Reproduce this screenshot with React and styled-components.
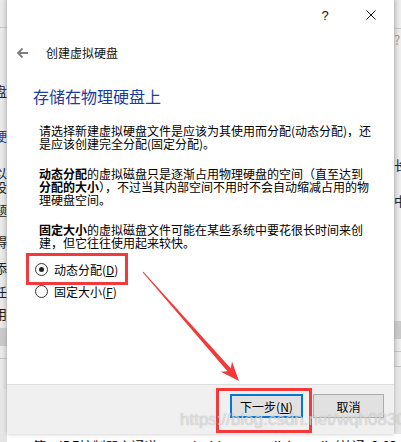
import React from "react";
import styled, { createGlobalStyle } from "styled-components";

const GlobalStyle = createGlobalStyle`
  html, body { margin: 0; padding: 0; background: #fff; }
  body { font-family: "Noto Sans CJK SC", "Noto Sans", sans-serif; }
`;

const Page = styled.div`
  position: relative;
  width: 401px;
  height: 442px;
  overflow: hidden;
  display: grid;
  grid-template-columns: 7px 387px 7px;
  grid-template-rows: 434px 8px;
  background: #f0f0f0;
  font-family: "Noto Sans CJK SC", "Noto Sans", sans-serif;
`;

const Strip = styled.div`
  display: flex;
  flex-direction: column;
  overflow: hidden;
  background: ${(p) => (p.$side === "left" ? "linear-gradient(90deg,#ececec,#dcdcdc)" : "linear-gradient(90deg,#d8d8d8,#f0f0f0)")};
`;

const StripBand = styled.div`
  height: ${(p) => p.$h}px;
  flex: none;
  background: ${(p) => p.$bg || "transparent"};
  border-bottom: ${(p) => (p.$line ? "1px solid #c4c4c4" : "none")};
`;

const StripGlyph = styled.div`
  display: flex;
  justify-content: ${(p) => (p.$side === "left" ? "flex-end" : "flex-start")};
  height: ${(p) => p.$h}px;
  flex: none;
  font-size: 13px;
  line-height: ${(p) => p.$h}px;
  color: ${(p) => p.$color || "#222"};
  white-space: nowrap;
  & > span { flex: none; }
`;

const Dialog = styled.div`
  display: flex;
  flex-direction: column;
  background: #fff;
  box-shadow: 0 0 4px rgba(0, 0, 0, 0.25);
  z-index: 1;
`;

const TitleBar = styled.div`
  display: flex;
  justify-content: flex-end;
  height: 30px;
  flex: none;
`;

const CaptionButton = styled.div`
  width: 46px;
  height: 30px;
  display: flex;
  align-items: center;
  justify-content: center;
  font-family: "Liberation Sans", sans-serif;
  font-size: 13px;
  color: #111;
`;

const NavRow = styled.div`
  display: flex;
  align-items: center;
  height: 24px;
  margin-top: 11px;
  padding-left: 9px;
  gap: 17px;
  flex: none;
`;

const WizardTitle = styled.div`
  font-size: 12px;
  color: #111;
  line-height: 24px;
`;

const Heading = styled.div`
  margin: 21px 0 0 26px;
  font-size: 16px;
  line-height: 20px;
  color: #1a3c9c;
  flex: none;
`;

const Body = styled.div`
  margin: 18px 0 0 32px;
  display: flex;
  flex-direction: column;
  gap: 17px;
  flex: none;
`;

const Para = styled.div`
  display: flex;
  flex-direction: column;
`;

const Line = styled.div`
  font-size: 12px;
  line-height: 13px;
  height: 13px;
  white-space: nowrap;
  color: #000;
  & b { font-weight: 700; }
`;

const RadioGroup = styled.div`
  margin: 10px 0 0 28px;
  display: flex;
  flex-direction: column;
  gap: 2px;
  flex: none;
`;

const RadioRow = styled.div`
  display: flex;
  align-items: center;
  height: 20px;
  gap: 6px;
  font-size: 12px;
  color: #000;
`;

const RadioCircle = styled.span`
  width: 11px;
  height: 11px;
  border-radius: 50%;
  border: 1px solid #333;
  display: flex;
  align-items: center;
  justify-content: center;
  background: #fff;
  &::after {
    content: "";
    width: 5px;
    height: 5px;
    border-radius: 50%;
    background: ${(p) => (p.$checked ? "#222" : "transparent")};
  }
`;

const Spacer = styled.div`
  flex: 1;
`;

const Footer = styled.div`
  height: 40px;
  flex: none;
  border-top: 1px solid #dfdfdf;
  background: #f0f0f0;
  display: flex;
  justify-content: flex-end;
  align-items: flex-start;
  padding: 9px 10px 0 0;
  gap: 10px;
  box-sizing: content-box;
`;

const Button = styled.div`
  width: ${(p) => p.$w}px;
  height: 24px;
  box-sizing: border-box;
  background: #e1e1e1;
  border: ${(p) => (p.$default ? "2px solid #0078d7" : "1px solid #adadad")};
  display: flex;
  align-items: center;
  justify-content: center;
  font-size: 12px;
  color: #000;
`;

const BottomStrip = styled.div`
  grid-column: 1 / span 3;
  background: #fff;
  overflow: hidden;
  font-size: 13px;
  line-height: 17px;
  white-space: nowrap;
  color: #000;
  border-left: 7px solid #e4e4e4;
  box-sizing: border-box;
  padding-left: 26px;
  padding-top: 3px;
`;

const RedBox = styled.div`
  position: absolute;
  left: ${(p) => p.$x}px;
  top: ${(p) => p.$y}px;
  width: ${(p) => p.$w}px;
  height: ${(p) => p.$h}px;
  box-sizing: border-box;
  border: 3px solid #f23a3a;
  z-index: 5;
`;

const Overlay = styled.svg`
  position: absolute;
  left: 0;
  top: 0;
  z-index: 5;
  pointer-events: none;
`;

const Watermark = styled.div`
  position: absolute;
  left: 180px;
  top: 410px;
  font-family: "Liberation Sans", Arial, sans-serif;
  font-size: 17px;
  line-height: 20px;
  color: rgba(255, 255, 255, 0.55);
  text-shadow: 0 0 1px rgba(110, 110, 110, 0.55);
  z-index: 6;
  white-space: nowrap;
`;

const BackArrow = () => (
  <svg width="13" height="12" viewBox="0 0 13 12">
    <path d="M12 6H2M6.5 1.5L2 6l4.5 4.5" fill="none" stroke="#7d7d7d" strokeWidth="1.8" />
  </svg>
);

const CloseIcon = () => (
  <svg width="10" height="10" viewBox="0 0 10 10">
    <path d="M0.5 0.5L9.5 9.5M9.5 0.5L0.5 9.5" stroke="#111" strokeWidth="1" />
  </svg>
);

function arrowPoints() {
  const sx = 143, sy = 272, tx = 239, ty = 381;
  const dx = tx - sx, dy = ty - sy;
  const len = Math.hypot(dx, dy);
  const ux = dx / len, uy = dy / len;
  const nx = -uy, ny = ux;
  const at = (d, w) => [sx + ux * d + nx * w, sy + uy * d + ny * w];
  const pts = [
    at(0, -0.5),
    at(len - 15, -2.2),
    at(len - 19, -7.5),
    [tx, ty],
    at(len - 19, 7.5),
    at(len - 15, 2.2),
    at(0, 0.5),
  ];
  return pts.map((p) => p.map((v) => v.toFixed(1)).join(",")).join(" ");
}

export default function App() {
  return (
    <>
      <GlobalStyle />
      <Page>
        <Strip $side="left">
          <StripBand $h={27} $line />
          <StripBand $h={56} />
          <StripGlyph $side="left" $h={14}><span>虚拟盘</span></StripGlyph>
          <StripBand $h={30} />
          <StripGlyph $side="left" $h={16} $color="#1a3c9c"><span>硬</span></StripGlyph>
          <StripBand $h={22} />
          <StripGlyph $side="left" $h={14}><span>以</span></StripGlyph>
          <StripGlyph $side="left" $h={14}><span>设</span></StripGlyph>
          <StripBand $h={8} />
          <StripGlyph $side="left" $h={16}><span>题</span></StripGlyph>
          <StripBand $h={16} />
          <StripGlyph $side="left" $h={16}><span>碍</span></StripGlyph>
          <StripBand $h={10} />
          <StripGlyph $side="left" $h={16}><span>添</span></StripGlyph>
          <StripBand $h={8} />
          <StripGlyph $side="left" $h={16}><span>任</span></StripGlyph>
          <StripBand $h={6} />
          <StripGlyph $side="left" $h={16}><span>用</span></StripGlyph>
          <StripBand $h={6} />
          <StripBand $h={18} $bg="#c9c9c9" />
          <StripBand $h={12} $line />
          <StripBand $h={30} />
          <StripBand $h={52} $bg="#e6e6e6" />
        </Strip>

        <Dialog>
          <TitleBar>
            <CaptionButton>?</CaptionButton>
            <CaptionButton><CloseIcon /></CaptionButton>
          </TitleBar>
          <NavRow>
            <BackArrow />
            <WizardTitle>创建虚拟硬盘</WizardTitle>
          </NavRow>
          <Heading>存储在物理硬盘上</Heading>
          <Body>
            <Para>
              <Line>请选择新建虚拟硬盘文件是应该为其使用而分配(动态分配)，还</Line>
              <Line>是应该创建完全分配(固定分配)。</Line>
            </Para>
            <Para>
              <Line><b>动态分配</b>的虚拟磁盘只是逐渐占用物理硬盘的空间（直至达到</Line>
              <Line><b>分配的大小</b>），不过当其内部空间不用时不会自动缩减占用的物</Line>
              <Line>理硬盘空间。</Line>
            </Para>
            <Para>
              <Line><b>固定大小</b>的虚拟磁盘文件可能在某些系统中要花很长时间来创</Line>
              <Line>建，但它往往使用起来较快。</Line>
            </Para>
          </Body>
          <RadioGroup>
            <RadioRow>
              <RadioCircle $checked />
              <span>动态分配(<u>D</u>)</span>
            </RadioRow>
            <RadioRow>
              <RadioCircle />
              <span>固定大小(<u>F</u>)</span>
            </RadioRow>
          </RadioGroup>
          <Spacer />
          <Footer>
            <Button $w={73} $default>下一步(<u>N</u>)</Button>
            <Button $w={71}>取消</Button>
          </Footer>
        </Dialog>

        <Strip $side="right">
          <StripBand $h={28} $line />
          <StripGlyph $side="right" $h={22} $color="#999"><span>?</span></StripGlyph>
          <StripBand $h={106} />
          <StripGlyph $side="right" $h={16}><span>长</span></StripGlyph>
          <StripBand $h={20} />
          <StripGlyph $side="right" $h={16}><span>中</span></StripGlyph>
          <StripBand $h={112} />
          <StripBand $h={18} $bg="#c9c9c9" />
          <StripBand $h={12} $line />
          <StripBand $h={14} $line />
          <StripBand $h={68} $bg="#e6e6e6" />
        </Strip>

        <BottomStrip>第一IDE控制器主通道：&nbsp;android system disk.vmdk (普通, 2.03 GB)</BottomStrip>

        <RedBox $x={26} $y={253} $w={102} $h={32} />
        <RedBox $x={216} $y={388} $w={96} $h={45} />
        <Overlay width="401" height="442" viewBox="0 0 401 442">
          <polygon points={arrowPoints()} fill="#f23a3a" />
        </Overlay>
        <Watermark>https://blog.csdn.net/wqh0830</Watermark>
      </Page>
    </>
  );
}
